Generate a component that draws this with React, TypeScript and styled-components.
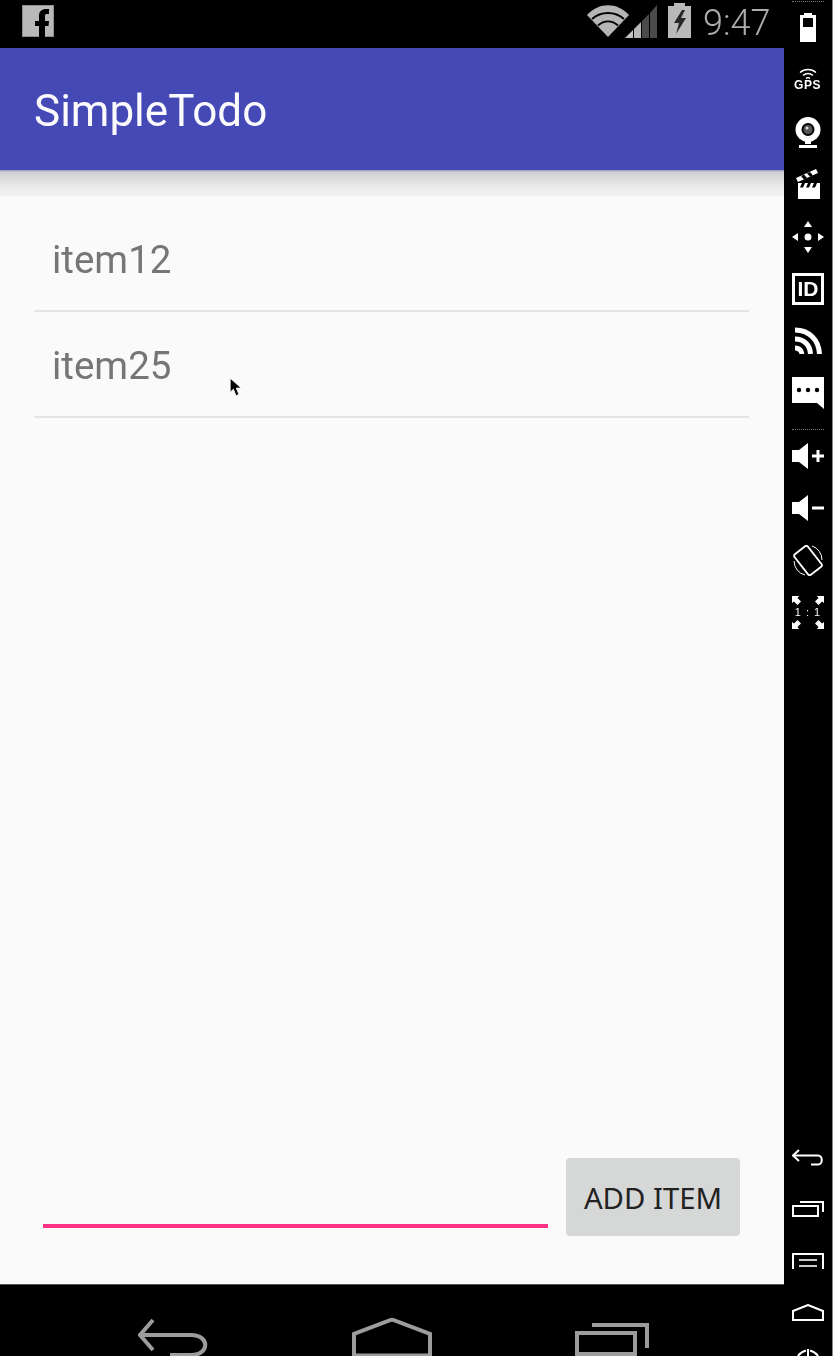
import React from 'react';
import styled, { createGlobalStyle } from 'styled-components';

const GlobalStyle = createGlobalStyle`
  html, body { margin: 0; padding: 0; background: #000; }
  body { font-family: Roboto, "Liberation Sans", sans-serif; }
`;

const Screen = styled.div`
  position: relative;
  display: flex;
  width: 833px;
  height: 1356px;
  overflow: hidden;
  background: #000;
`;

const Device = styled.div`
  display: flex;
  flex-direction: column;
  width: 784px;
  height: 100%;
`;

/* status bar */
const StatusBar = styled.div`
  display: flex;
  align-items: flex-start;
  height: 48px;
  padding: 5px 0 0 22px;
  box-sizing: border-box;
  background: #000;
  flex: none;
`;

const StatusIcons = styled.div`
  display: flex;
  align-items: flex-start;
  margin-left: auto;
  margin-top: -2px;
`;

const Clock = styled.span`
  margin: -2px 14px 0 12px;
  font-size: 36px;
  line-height: 44px;
  font-weight: 300;
  color: #acacac;
  will-change: transform;
`;

/* app bar */
const AppBar = styled.header`
  display: flex;
  align-items: center;
  height: 122px;
  padding: 3px 0 0 34px;
  box-sizing: border-box;
  background: #4549b6;
  flex: none;
`;

const AppTitle = styled.h1`
  margin: 0;
  font-size: 44px;
  font-weight: 400;
  color: #fbfbfd;
  will-change: transform;
`;

const BarShadow = styled.div`
  height: 27px;
  flex: none;
  background: linear-gradient(#8f91bd 0, #cfd0d1 2px, #d8d9d9 7px, #eeeeee 19px, #f1f1f1 26px, #fafafa 27px);
`;

/* content */
const Content = styled.main`
  display: flex;
  flex-direction: column;
  flex: 1;
  min-height: 0;
  background: #fafafa;
`;

const TodoList = styled.ul`
  list-style: none;
  margin: 0;
  padding: 9px 35px 0 34px;
  flex: 1;
`;

const TodoRow = styled.li`
  height: 106px;
  box-sizing: border-box;
  padding: 4px 0 0 18px;
  border-bottom: 2px solid #e4e4e4;
`;

const TodoLabel = styled.span`
  display: block;
  font-size: 38.500px;
  line-height: 100px;
  color: #767676;
  will-change: transform;
`;

const Composer = styled.div`
  display: flex;
  align-items: flex-end;
  gap: 18px;
  padding: 0 44px 48px 43px;
`;

const Underline = styled.div`
  flex: 1;
  height: 4px;
  margin-bottom: 8px;
  background: #fd3186;
`;

const AddButton = styled.button`
  width: 174px;
  height: 78px;
  padding: 2px 0 0;
  border: 0;
  border-radius: 4px;
  background: #d6d7d7;
  font-family: "Noto Sans", Roboto, sans-serif;
  font-size: 29.300px;
  color: #222;
`;

const Cursor = styled.svg`
  position: absolute;
  left: 229px;
  top: 377px;
`;

/* bottom nav */
const NavBar = styled.nav`
  display: flex;
  align-items: flex-start;
  gap: 143px;
  height: 72px;
  padding: 33px 0 0 138px;
  box-sizing: border-box;
  border-top: 1px solid #555;
  background: #000;
  overflow: hidden;
  flex: none;
`;

/* emulator side rail */
const Rail = styled.aside`
  display: flex;
  flex-direction: column;
  justify-content: space-between;
  width: 49px;
  height: 100%;
  box-sizing: border-box;
  overflow: hidden;
  background: #000;
  border-right: 1px solid #8a8a8a;
`;

const RailGroup = styled.div`
  display: flex;
  flex-direction: column;
  align-items: center;
`;

const RailSlot = styled.div<{ $h?: number; $end?: boolean }>`
  display: flex;
  align-items: ${(p) => (p.$end ? 'flex-end' : 'center')};
  justify-content: center;
  width: 100%;
  height: ${(p) => p.$h ?? 52}px;
  flex: none;
`;

const DottedRule = styled.div`
  width: 32px;
  height: 0;
  border-top: 1px dotted #777;
`;

const GpsLabel = styled.span`
  margin-top: -1px;
  font-family: "Liberation Sans", sans-serif;
  font-size: 12px;
  font-weight: 700;
  letter-spacing: 0.6px;
  line-height: 12px;
  color: #fff;
  will-change: transform;
`;

const GpsIcon = styled.div`
  display: flex;
  flex-direction: column;
  align-items: center;
`;

const IdBox = styled.div`
  display: flex;
  align-items: center;
  justify-content: center;
  width: 32px;
  height: 32px;
  box-sizing: border-box;
  border: 3px solid #fff;
  font-family: "Liberation Sans", sans-serif;
  font-size: 21px;
  font-weight: 700;
  color: #fff;
  will-change: transform;
`;

const OneToOne = styled.div`
  position: relative;
  width: 32px;
  height: 33px;
`;

const OneToOneLabel = styled.span`
  position: absolute;
  left: 0;
  right: 0;
  top: 9px;
  text-align: center;
  font-family: "Liberation Sans", sans-serif;
  font-size: 11px;
  line-height: 14px;
  letter-spacing: 1px;
  color: #fff;
  will-change: transform;
`;

const FacebookIcon = () => (
  <svg width="32" height="32" viewBox="0 0 32 32">
    <rect x="0.5" y="0.5" width="31" height="31" fill="#b9b9b9" stroke="#8e8e8e" />
    <path d="M17 32V21H13V16H17V11C17 6 20 4 24 4H27V9H25C23.500 9 23 9.500 23 11V16H27L26.500 21H23V32z" fill="#000" />
  </svg>
);

const WifiIcon = () => (
  <svg width="42" height="32" viewBox="0 0 42 32" style={{ marginTop: 2 }}>
    <path d="M0 10 C12 -3 30 -3 42 10 L21 32z" fill="#b5b5b5" />
    <path d="M5 14 C14 6 28 6 37 14" fill="none" stroke="#000" strokeWidth="1.800" />
    <path d="M11 20.500 C17 15 25 15 31 20.500" fill="none" stroke="#000" strokeWidth="1.800" />
  </svg>
);

const SignalIcon = () => (
  <svg width="32" height="34" viewBox="0 0 32 34" style={{ marginLeft: -4, marginTop: 1 }}>
    <path d="M0 34 L8 26 V34z" fill="#c4c4c4" />
    <path d="M9 34 V25 L16 18 V34z" fill="#b9b9b9" />
    <path d="M17 34 V17 L24 10 V34z" fill="#4a4a4a" />
    <path d="M25 34 V9 L32 1 V34z" fill="#4a4a4a" />
  </svg>
);

const BatteryIcon = () => (
  <svg width="23" height="35" viewBox="0 0 23 35" style={{ marginLeft: 11 }}>
    <path d="M6 0h11v3h6v32H0V3h6z" fill="#b9b9b9" />
    <path d="M14 7 L6 20 h5 L8 31 L18 15 h-5 L17 7z" fill="#262626" />
  </svg>
);

const RailBattery = () => (
  <svg width="16" height="29" viewBox="0 0 16 29">
    <path d="M4 0h8v2h4v27H0V2h4z" fill="#fff" />
    <rect x="3" y="5" width="10" height="9" fill="#000" />
  </svg>
);

const RailWifi = () => (
  <svg width="20" height="12" viewBox="0 0 20 12" fill="none" stroke="#fff" strokeWidth="1.500">
    <path d="M2 4.500 C6.500 .5 13.500 .5 18 4.500" />
    <path d="M5 7.500 C8 5 12 5 15 7.500" />
    <path d="M8 10.500 C9 9.500 11 9.500 12 10.500" />
  </svg>
);

const RailWebcam = () => (
  <svg width="26" height="31" viewBox="0 0 26 31">
    <circle cx="13" cy="12.500" r="12.500" fill="#fff" />
    <circle cx="13" cy="12.500" r="6.500" fill="#000" />
    <circle cx="13" cy="12.500" r="4.500" fill="#555" />
    <circle cx="12" cy="11" r="1.500" fill="#ddd" />
    <rect x="10" y="24" width="6" height="3" fill="#fff" />
    <rect x="4" y="28" width="18" height="3" fill="#fff" />
  </svg>
);

const RailClapper = () => (
  <svg width="24" height="30" viewBox="0 0 24 30">
    <path d="M0 9 L20 0 L22 4 L2 13z" fill="#fff" />
    <path d="M5 7 L8 5.500 L11 9 L8 10.500zM11 4.300 L14 3 L17 6.500 L14 7.800z" fill="#000" />
    <rect x="2" y="14" width="22" height="16" fill="#fff" />
    <path d="M6 14h3l-2 4.500H4zM12 14h3l-2 4.500h-3zM18 14h3l-2 4.500h-3z" fill="#000" />
  </svg>
);

const RailMove = () => (
  <svg width="32" height="32" viewBox="0 0 32 32" fill="#fff">
    <path d="M16 0 L20 6 H12z" />
    <path d="M16 32 L20 26 H12z" />
    <path d="M0 16 L6 12 V20z" />
    <path d="M32 16 L26 12 V20z" />
    <circle cx="16" cy="16" r="3.500" />
  </svg>
);

const RailRss = () => (
  <svg width="27" height="27" viewBox="0 0 27 27" fill="none" stroke="#fff" strokeWidth="5">
    <path d="M0 3 C14 3 24 13 24.500 27" />
    <path d="M0 12 C9 12 15 18 15.500 27" />
    <path d="M0 21 C4 21 6.500 23.500 7 27" />
  </svg>
);

const RailMessage = () => (
  <svg width="32" height="32" viewBox="0 0 32 32">
    <path d="M0 0H32V32L25 26H0z" fill="#fff" />
    <circle cx="7" cy="13" r="2.200" fill="#000" />
    <circle cx="16" cy="13" r="2.200" fill="#000" />
    <circle cx="25" cy="13" r="2.200" fill="#000" />
  </svg>
);

const RailVolume = ({ plus }: { plus?: boolean }) => (
  <svg width="32" height="26" viewBox="0 0 32 26" fill="#fff">
    <path d="M0 7 H7 L16 0 V26 L7 19 H0z" />
    <rect x="20" y="11.500" width="12" height="3" />
    {plus && <rect x="24.500" y="7" width="3" height="12" />}
  </svg>
);

const RailRotate = () => (
  <svg width="30" height="31" viewBox="0 0 30 31" fill="none" stroke="#fff">
    <rect x="6.500" y="2.500" width="17" height="26" rx="2" strokeWidth="1.800" transform="rotate(-38 15 15.500)" />
    <path d="M19 1 A14.500 14.500 0 0 1 29 15" strokeWidth="1" />
    <path d="M1 16 A14.500 14.500 0 0 0 12 30" strokeWidth="1" />
  </svg>
);

const RailZoomArrows = () => (
  <svg width="32" height="33" viewBox="0 0 32 33" fill="#fff">
    <path d="M0 0H7L5.500 2 9 5.500 5.500 9 2 5.500 0 7z" />
    <path d="M32 0H25L26.500 2 23 5.500 26.500 9 30 5.500 32 7z" />
    <path d="M0 33H7L5.500 31 9 27.500 5.500 24 2 27.500 0 26z" />
    <path d="M32 33H25L26.500 31 23 27.500 26.500 24 30 27.500 32 26z" />
  </svg>
);

const RailBack = () => (
  <svg width="32" height="17" viewBox="0 0 32 17" fill="none" stroke="#fff" strokeWidth="2">
    <path d="M7 1 L1 6.500 L7 12" />
    <path d="M1 6.500 H26 C31 6.500 31 15.500 26 15.500 H19" />
  </svg>
);

const RailRecents = () => (
  <svg width="32" height="16" viewBox="0 0 32 16" fill="none" stroke="#fff" strokeWidth="2">
    <rect x="1" y="5" width="25" height="10" />
    <path d="M8 1 H31 V11" />
  </svg>
);

const RailMenu = () => (
  <svg width="32" height="16" viewBox="0 0 32 16" fill="none" stroke="#fff" strokeWidth="2">
    <path d="M1 16 V1 H31 V16" />
    <path d="M7 7 H25 M7 13 H25" stroke="#ccc" />
  </svg>
);

const RailHome = () => (
  <svg width="32" height="17" viewBox="0 0 32 17" fill="none" stroke="#fff" strokeWidth="2">
    <path d="M1 16 V7 L16 1 L31 7 V16z" />
  </svg>
);

const RailPower = () => (
  <svg width="32" height="7" viewBox="0 0 32 7" fill="none" stroke="#fff" strokeWidth="2">
    <path d="M6 7 C8 4 12 2 14 1.500 M26 7 C24 4 20 2 18 1.500" />
    <path d="M16 0 V7" />
  </svg>
);

const NavBack = () => (
  <svg width="71" height="39" viewBox="0 0 71 39" fill="none" stroke="#9c9c9c" strokeWidth="4">
    <path d="M15 2 L2 17 L15 32" />
    <path d="M2 17 H53 C72 17 72 37 53 37 H32" />
  </svg>
);

const NavHome = () => (
  <svg width="80" height="44" viewBox="0 0 80 44" fill="none" stroke="#9c9c9c" strokeWidth="4">
    <path d="M2 42 V16 L40 1.500 L78 16 V42" />
    <path d="M2 37.500 H78" />
  </svg>
);

const NavRecents = () => (
  <svg width="74" height="39" viewBox="0 0 74 39" fill="none" stroke="#9c9c9c" strokeWidth="4">
    <rect x="2" y="15" width="58" height="21" />
    <path d="M17 7 H72 V30" />
  </svg>
);

const CursorIcon = () => (
  <Cursor width="14" height="21" viewBox="0 0 12 18">
    <path d="M1 1 V13 L3.800 10.500 L6 16 L8.500 15 L6.300 9.500 H10.500z" fill="#000" stroke="#fff" strokeWidth="0.700" />
  </Cursor>
);

const items = ['item12', 'item25'];

const App: React.FC = () => {
  return (
    <>
      <GlobalStyle />
      <Screen>
        <Device>
          <StatusBar>
            <FacebookIcon />
            <StatusIcons>
              <WifiIcon />
              <SignalIcon />
              <BatteryIcon />
              <Clock>9:47</Clock>
            </StatusIcons>
          </StatusBar>
          <AppBar>
            <AppTitle>SimpleTodo</AppTitle>
          </AppBar>
          <BarShadow />
          <Content>
            <TodoList>
              {items.map((item) => (
                <TodoRow key={item}>
                  <TodoLabel>{item}</TodoLabel>
                </TodoRow>
              ))}
            </TodoList>
            <Composer>
              <Underline />
              <AddButton>ADD ITEM</AddButton>
            </Composer>
          </Content>
          <NavBar>
            <NavBack />
            <NavHome />
            <NavRecents />
          </NavBar>
        </Device>
        <Rail>
          <RailGroup>
            <RailSlot $h={2}><DottedRule /></RailSlot>
            <RailSlot $h={51}><RailBattery /></RailSlot>
            <RailSlot>
              <GpsIcon>
                <RailWifi />
                <GpsLabel>GPS</GpsLabel>
              </GpsIcon>
            </RailSlot>
            <RailSlot $h={54}><RailWebcam /></RailSlot>
            <RailSlot $h={50}><RailClapper /></RailSlot>
            <RailSlot $h={56}><RailMove /></RailSlot>
            <RailSlot $h={48}><IdBox>ID</IdBox></RailSlot>
            <RailSlot $h={54}><RailRss /></RailSlot>
            <RailSlot><RailMessage /></RailSlot>
            <RailSlot $h={11} $end><DottedRule /></RailSlot>
            <RailSlot><RailVolume plus /></RailSlot>
            <RailSlot><RailVolume /></RailSlot>
            <RailSlot><RailRotate /></RailSlot>
            <RailSlot>
              <OneToOne>
                <RailZoomArrows />
                <OneToOneLabel>1 : 1</OneToOneLabel>
              </OneToOne>
            </RailSlot>
          </RailGroup>
          <RailGroup>
            <RailSlot><RailBack /></RailSlot>
            <RailSlot><RailRecents /></RailSlot>
            <RailSlot $h={51}><RailMenu /></RailSlot>
            <RailSlot><RailHome /></RailSlot>
            <RailSlot $h={18} $end><RailPower /></RailSlot>
          </RailGroup>
        </Rail>
        <CursorIcon />
      </Screen>
    </>
  );
};

export default App;
